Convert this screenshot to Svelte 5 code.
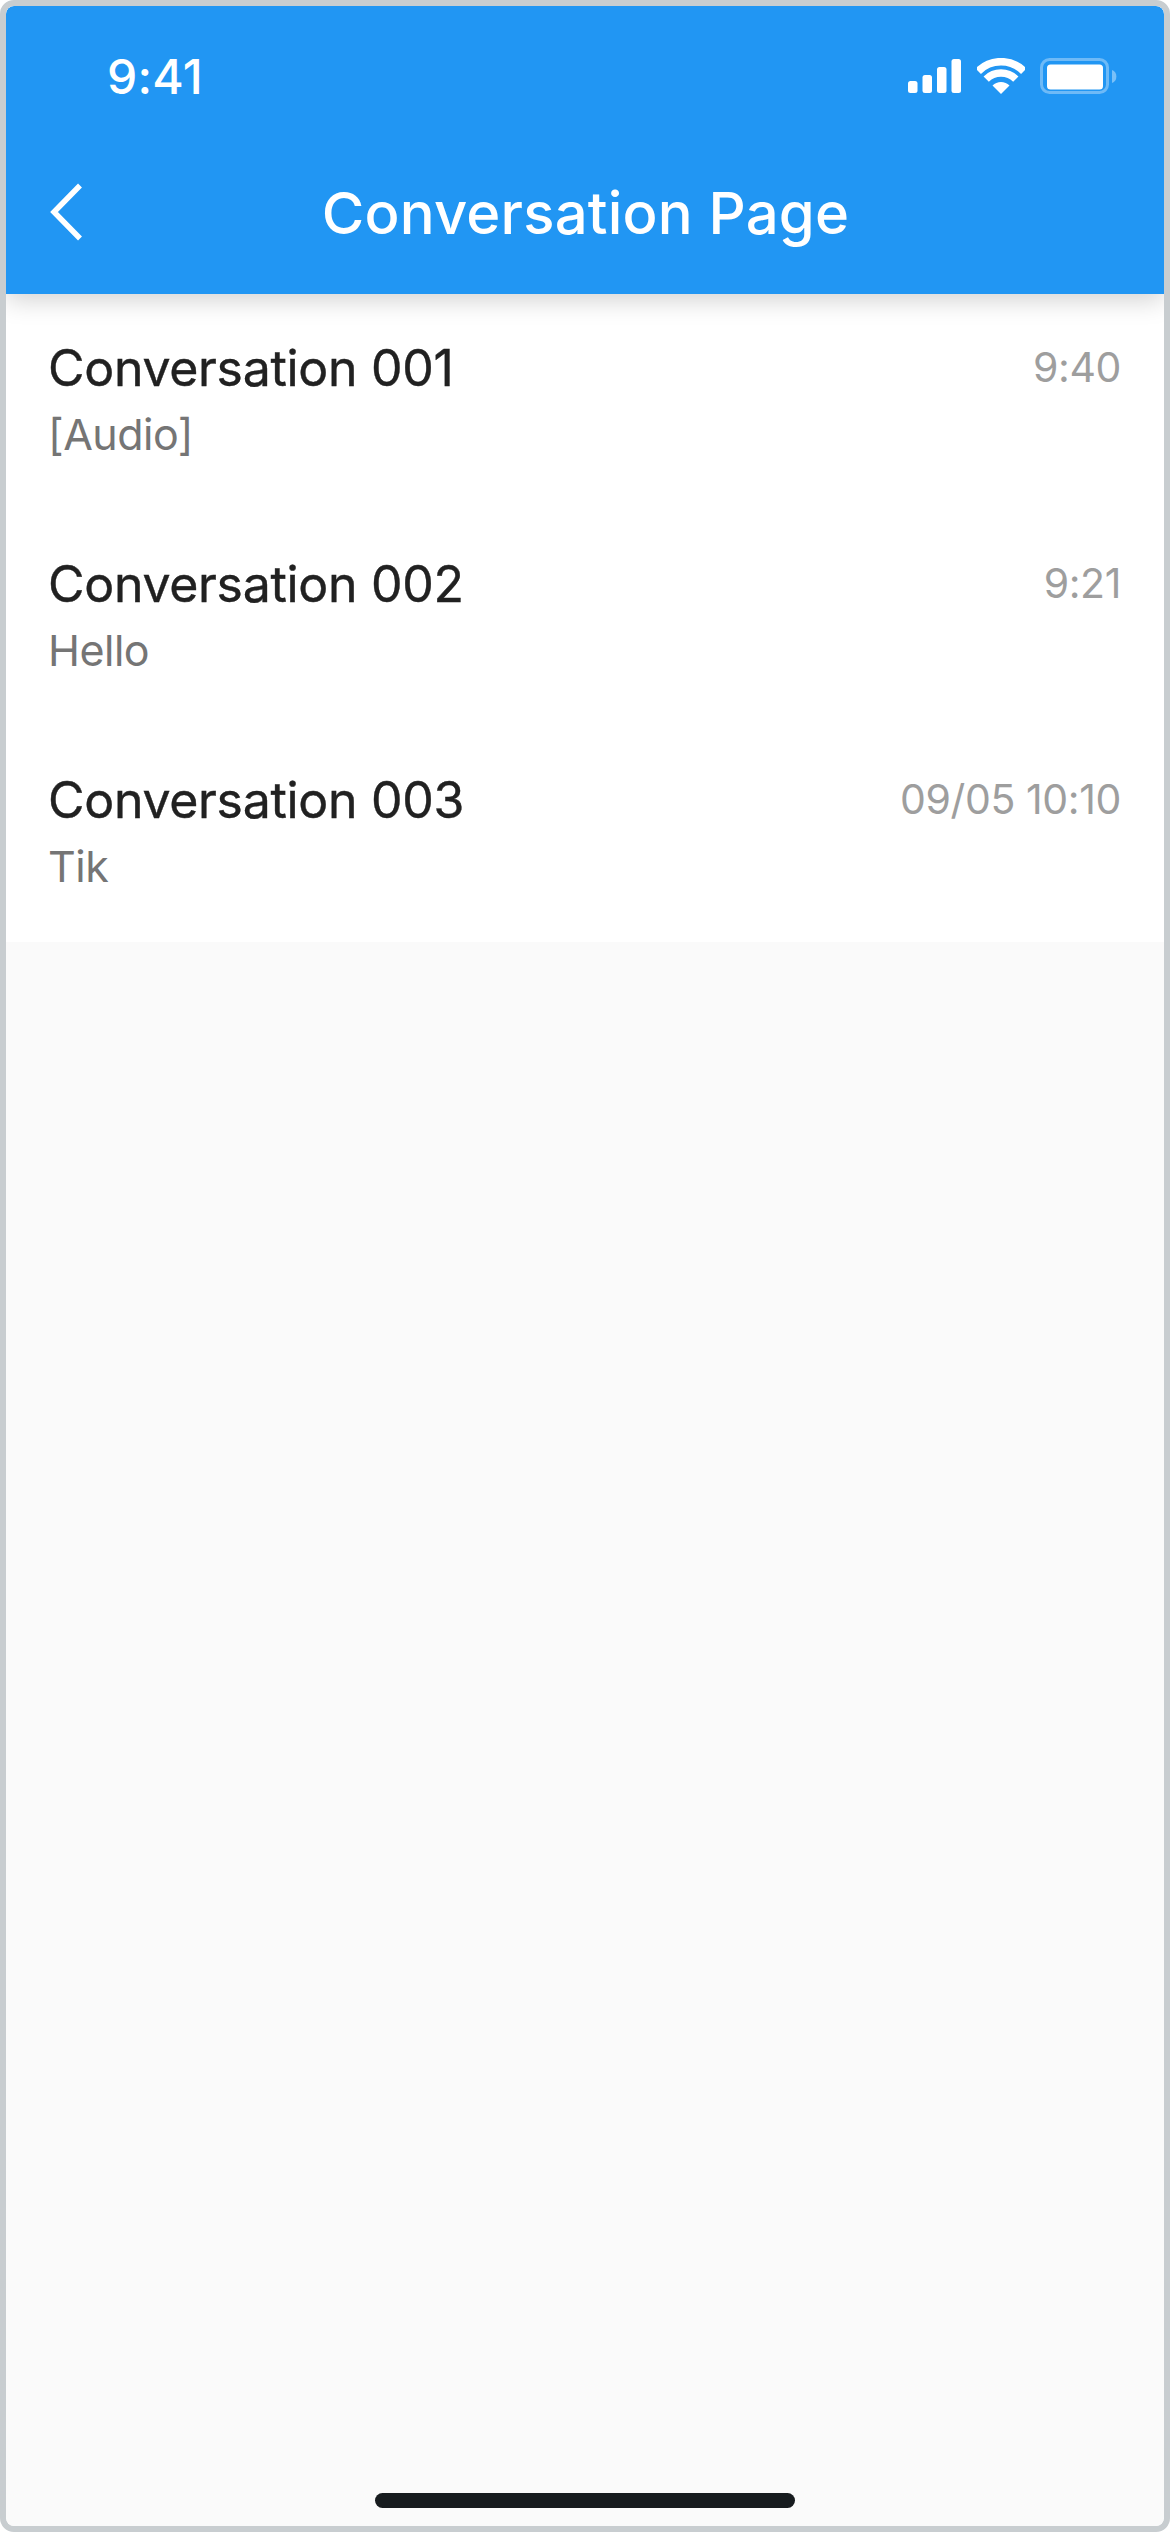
<script>
  const rows = [
    { title: 'Conversation 001', sub: '[Audio]', time: '9:40' },
    { title: 'Conversation 002', sub: 'Hello', time: '9:21' },
    { title: 'Conversation 003', sub: 'Tik', time: '09/05 10:10' }
  ];
</script>

<div class="frame">
  <div class="screen">
    <header class="header">
      <div class="status">
        <span class="clock">9:41</span>
        <div class="status-icons">
          <svg class="signal" width="53" height="34" viewBox="0 0 53 34">
            <rect x="0" y="22" width="9.5" height="12" rx="2.5" />
            <rect x="14.5" y="16" width="9.5" height="18" rx="2.5" />
            <rect x="29" y="8" width="9.5" height="26" rx="2.5" />
            <rect x="43.5" y="0" width="9.5" height="34" rx="2.5" />
          </svg>
          <svg class="wifi" width="48" height="36" viewBox="0 0 48 36">
            <path d="M1.2 13.2 A32.2 32.2 0 0 1 46.8 13.2" fill="none" stroke="#fff" stroke-width="7.7" />
            <path d="M9.2 21.2 A21 21 0 0 1 38.8 21.2" fill="none" stroke="#fff" stroke-width="7.5" />
            <path d="M24 36 L15.5 27.5 A12 12 0 0 1 32.5 27.5 Z" fill="#fff" />
          </svg>
          <svg class="battery" width="77" height="36" viewBox="0 0 77 36">
            <rect x="1.5" y="1.5" width="66" height="33" rx="8" fill="none" stroke="#fff" stroke-opacity="0.35" stroke-width="3" />
            <rect x="7" y="6.5" width="56" height="25" rx="3.5" fill="#fff" />
            <path d="M72 12 A7 7 0 0 1 72 25 Z" fill="#fff" fill-opacity="0.4" />
          </svg>
        </div>
      </div>
      <div class="nav">
        <svg class="back" width="36" height="60" viewBox="0 0 36 60">
          <path d="M32 3.5 L6 30 L32 56.5" fill="none" stroke="#fff" stroke-width="5.5" />
        </svg>
        <h1>Conversation Page</h1>
      </div>
    </header>

    <ul class="list">
      {#each rows as row}
        <li class="row">
          <div class="text">
            <div class="title">{row.title}</div>
            <div class="sub">{row.sub}</div>
          </div>
          <div class="time">{row.time}</div>
        </li>
      {/each}
    </ul>

    <div class="home"></div>
  </div>
</div>

<style>
  :global(body) {
    margin: 0;
    background: #fff;
  }
  .frame {
    width: 1170px;
    height: 2532px;
    box-sizing: border-box;
    border: 6px solid #c8cdd0;
    border-radius: 14px;
    font-family: Inter, "Liberation Sans", sans-serif;
    overflow: hidden;
  }
  .screen {
    height: 100%;
    display: flex;
    flex-direction: column;
    background: #fafafa;
    border-radius: 8px;
    overflow: hidden;
  }
  .header {
    height: 288px;
    flex: none;
    background: #2196f3;
    color: #fff;
    box-shadow: 0 6px 24px rgba(0, 0, 0, 0.18);
    position: relative;
    z-index: 1;
  }
  .status {
    padding: 52px 0 0;
    height: 36px;
    display: flex;
    justify-content: space-between;
    align-items: center;
  }
  .clock {
    margin-left: 101px;
    font-size: 48px;
    font-weight: 500;
    letter-spacing: 0.2px;
  }
  .status-icons {
    display: flex;
    align-items: center;
    margin-right: 47px;
  }
  .signal {
    fill: #fff;
    margin-right: 16px;
  }
  .wifi {
    margin-right: 15px;
  }
  .nav {
    display: flex;
    align-items: center;
    position: relative;
    height: 84px;
    margin-top: 77px;
    justify-content: center;
  }
  .back {
    position: absolute;
    left: 42px;
    top: 11px;
  }
  h1 {
    margin: 0 0 0 1px;
    font-size: 58px;
    font-weight: 500;
    line-height: 84px;
    letter-spacing: 0.2px;
  }
  .list {
    list-style: none;
    margin: 0;
    padding: 0;
    background: #fff;
    height: 648px;
    flex: none;
  }
  .row {
    height: 216px;
    box-sizing: border-box;
    padding: 44px 43px 0 42px;
    display: flex;
    justify-content: space-between;
    align-items: flex-start;
  }
  .title {
    font-size: 50px;
    line-height: 60px;
    color: #212121;
    font-weight: 400;
    letter-spacing: -0.3px;
    -webkit-text-stroke: 0.4px #212121;
  }
  .sub {
    font-size: 43px;
    line-height: 52px;
    margin-top: 10px;
    color: #757575;
    letter-spacing: -0.5px;
  }
  .time {
    font-size: 41px;
    line-height: 52px;
    color: #9e9e9e;
    margin-top: 3px;
    letter-spacing: -0.4px;
  }
  .home {
    margin: auto auto 18px;
    width: 420px;
    height: 15px;
    border-radius: 8px;
    background: #171b1e;
  }
</style>
